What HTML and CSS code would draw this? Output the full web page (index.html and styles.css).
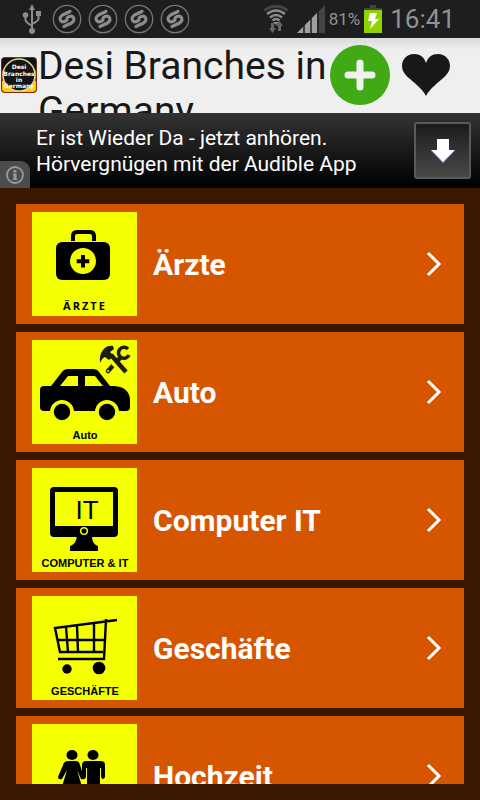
FILE: index.html
```html
<!DOCTYPE html>
<html lang="de">
<head>
    <meta charset="utf-8">
    <meta name="viewport" content="width=device-width, initial-scale=1">
    <title>Desi Branches in Germany</title>
    <link rel="stylesheet" href="styles.css">
</head>
<body>
    <div class="status-bar">
        <div class="status-left">
            <svg class="usb" width="20" height="30" viewBox="0 0 20 30" fill="none" stroke="#8c8c8c" stroke-width="2">
                <path d="M10 4v22M3.500 11v5q0 2 6.500 6M16.500 10v5q0 2-6.500 5"/>
                <path d="M10 0l3 6H7zM14 7h5v5h-5z" fill="#8c8c8c" stroke="none"/>
                <circle cx="3.500" cy="11" r="2.800" fill="#8c8c8c" stroke="none"/>
                <circle cx="10" cy="27" r="3" fill="#8c8c8c" stroke="none"/>
            </svg>
            <svg class="shazam" viewBox="0 0 30 30"><use href="#shazam"/></svg>
            <svg class="shazam" viewBox="0 0 30 30"><use href="#shazam"/></svg>
            <svg class="shazam" viewBox="0 0 30 30"><use href="#shazam"/></svg>
            <svg class="shazam" viewBox="0 0 30 30"><use href="#shazam"/></svg>
        </div>
        <div class="status-right">
            <svg width="26" height="28" viewBox="0 0 26 28" fill="none">
                <path d="M1.500 5.500Q13-3 24.500 5.500" stroke="#444" stroke-width="3"/>
                <path d="M4 9q9-7 18 0M7 12.500q6-5 12 0M9.500 15.500q3.500-3 7 0" stroke="#8c8c8c" stroke-width="2.400"/>
                <path d="M10 17h6l-3 3z" fill="#8c8c8c"/>
                <path d="M8 18h3v5h2l-3.500 5L6 23h2zM15 26v-5h-2l3.500-5 3.500 5h-2v5z" fill="#666"/>
            </svg>
            <svg class="signal" width="28" height="28" viewBox="0 0 28 28">
                <path d="M0 28L28 0v28z" fill="#444"/>
                <path d="M0 28L20 8v20z" fill="#a0a0a0"/>
                <path d="M7 20v8M14 13v15M21 6v22" stroke="#1e1e1e" stroke-width="1.500"/>
            </svg>
            <span class="battery-level">81%</span>
            <svg class="battery" width="18" height="28" viewBox="0 0 18 28">
                <path d="M6 0h6v3h6v3H0V3h6z" fill="#444"/>
                <path d="M0 5h18v23H0z" fill="#8fd400"/>
                <path d="M6 8h7l-2 6h4L6 24l2-8H4z" fill="#fff"/>
            </svg>
            <span class="clock">16:41</span>
        </div>
    </div>

    <header class="header">
        <svg class="logo" viewBox="0 0 36 36">
            <rect x="0.500" y="0.500" width="35" height="35" rx="3" fill="#111"/>
            <path d="M1 13h34v12H1z" fill="#d8251c"/>
            <path d="M1 24h34v8q0 3-3 3H4q-3 0-3-3z" fill="#fc0"/>
            <rect x="0.500" y="0.500" width="35" height="35" rx="3" fill="none" stroke="#7a2a10"/>
            <circle cx="18" cy="18" r="16" fill="#151515" stroke="#e6d98c" stroke-width="1.500"/>
            <text x="18" y="12">Desi</text>
            <text x="18" y="19">Branches</text>
            <text x="18" y="25">in</text>
            <text x="18" y="31">Germany</text>
        </svg>
        <h1>Desi Branches in Germany</h1>
        <button class="add-button" aria-label="Hinzufügen">
            <svg viewBox="0 0 60 60">
                <circle cx="30" cy="30" r="30" fill="#40a913"/>
                <path d="M30 18v24M18 30h24" stroke="#f0f0f0" stroke-width="7" stroke-linecap="round"/>
            </svg>
        </button>
        <button class="fav-button" aria-label="Favoriten">
            <svg viewBox="0 0 48 42">
                <path d="M24 42C21 36 15 31 8 25C2 20 0 16 0 12C0 5 5 0 12 0C18 0 22 3 24 9C26 3 30 0 36 0C43 0 48 5 48 12C48 16 46 20 40 25C33 31 27 36 24 42Z" fill="#181818"/>
            </svg>
        </button>
    </header>

    <div class="ad">
        <p>Er ist Wieder Da - jetzt anhören.<br>Hörvergnügen mit der Audible App</p>
        <button class="ad-download" aria-label="Herunterladen">
            <svg width="24" height="24" viewBox="0 0 24 24">
                <path d="M6 0h12v11h6L12 24 0 11h6z" fill="#fff"/>
                <path d="M0 11.500L12 23.500l12-12" fill="none" stroke="#4c68bd"/>
            </svg>
        </button>
        <button class="ad-info" aria-label="Info">
            <svg width="18" height="18" viewBox="0 0 18 18">
                <circle cx="9" cy="9" r="8" fill="none" stroke="#999" stroke-width="1.800"/>
                <path d="M7.500 4h3v2.500h-3zM6.500 7.500h4V13h1v1h-5v-1h1V8.500h-1z" fill="#999"/>
            </svg>
        </button>
    </div>

    <main class="content">
        <nav class="list">
            <a class="item" href="#aerzte">
                <svg class="thumb" viewBox="0 0 105 104">
                    <path d="M41 29v-5q0-4 4-4h13q4 0 4 4v5" fill="none" stroke="#000" stroke-width="4"/>
                    <rect x="24" y="30" width="54" height="38" rx="6"/>
                    <circle cx="51" cy="49" r="13" fill="#f4ff00"/>
                    <path d="M51 43v12.500M44.700 49.200h12.600" stroke="#000" stroke-width="4"/>
                    <text class="caption spaced" x="53" y="98">ÄRZTE</text>
                </svg>
                <span class="name">Ärzte</span>
                <svg class="chevron" viewBox="0 0 16 26"><path d="M2 2l11 11L2 24"/></svg>
            </a>
            <a class="item" href="#auto">
                <svg class="thumb" viewBox="0 0 105 104">
                    <path d="M8 50q0-4 4-4h7L30 32q2-3 6-3h25q4 0 6 3l11 14h4q16 1 16 15v6q0 4-4 4H12q-4 0-4-4z"/>
                    <path d="M28 46l8-10h10v10zM53 36h10l8 10H53z" fill="#f4ff00"/>
                    <path d="M18 72a12 12 0 0 1 24 0zM63 72a12 12 0 0 1 24 0z" fill="#f4ff00"/>
                    <circle cx="30" cy="72" r="8.200"/>
                    <circle cx="75" cy="72" r="8.200"/>
                    <path d="M96 9A5.500 5.500 0 1 0 97 15" fill="none" stroke="#1c1c10" stroke-width="3.500"/>
                    <path d="M88 18L76 31" stroke="#1c1c10" stroke-width="4.500" stroke-linecap="round"/>
                    <path d="M74 14L96 38" stroke="#f4ff00" stroke-width="6"/>
                    <path d="M79 15L94 32" stroke="#1c1c10" stroke-width="4.500"/>
                    <path d="M68 23q-1-8 3-13 4-5 10-4l1 3-4 3 4 4-5 4-4-3q-3 1-5 6z" fill="#1c1c10"/>
                    <circle cx="76" cy="31" r="1" fill="#f4ff00"/>
                    <text class="caption" x="53" y="99">Auto</text>
                </svg>
                <span class="name">Auto</span>
                <svg class="chevron" viewBox="0 0 16 26"><path d="M2 2l11 11L2 24"/></svg>
            </a>
            <a class="item" href="#computer">
                <svg class="thumb" viewBox="0 0 105 104">
                    <rect x="18" y="19" width="68" height="50" rx="4"/>
                    <path d="M23 24h58v34H23z" fill="#f4ff00"/>
                    <path d="M45 68h15q0 8 6 10v5H38v-5q6-2 7-10z"/>
                    <circle cx="52" cy="63" r="3.300" fill="none" stroke="#f4ff00" stroke-width="1.500"/>
                    <text class="screen-text" x="55" y="51">IT</text>
                    <text class="caption" x="53" y="99">COMPUTER &amp; IT</text>
                </svg>
                <span class="name">Computer IT</span>
                <svg class="chevron" viewBox="0 0 16 26"><path d="M2 2l11 11L2 24"/></svg>
            </a>
            <a class="item" href="#geschaefte">
                <svg class="thumb" viewBox="0 0 105 104">
                    <path d="M85 24L23 32l5 24h43M74 23l-2 40H26M25 44h48M34 31l2 25M45 30l1 26M62 27v29" fill="none" stroke="#000" stroke-width="2.400"/>
                    <circle cx="35" cy="73" r="4.700"/>
                    <circle cx="67" cy="72" r="6.300"/>
                    <text class="caption" x="53" y="99">GESCHÄFTE</text>
                </svg>
                <span class="name">Geschäfte</span>
                <svg class="chevron" viewBox="0 0 16 26"><path d="M2 2l11 11L2 24"/></svg>
            </a>
            <a class="item" href="#hochzeit">
                <svg class="thumb" viewBox="0 0 105 104">
                    <ellipse cx="40" cy="31" rx="5.500" ry="5"/>
                    <ellipse cx="61" cy="31" rx="5.500" ry="5"/>
                    <path d="M36 37h8q3 0 4 4l4 12q0 3-3 2l-4-9 6 20H29l6-20-5 9q-4 1-4-2l5-12q1-4 5-4zM34 66h5v20h-5zM41 66h5v20h-5z"/>
                    <path d="M54 37h15q4 0 4 4v12q-2 4-4 0v-9h-1v42h-6V62h-1v24h-6V44h-1v9q-2 4-4 1V41q0-4 4-4z"/>
                </svg>
                <span class="name">Hochzeit</span>
                <svg class="chevron" viewBox="0 0 16 26"><path d="M2 2l11 11L2 24"/></svg>
            </a>
        </nav>
    </main>

    <svg width="0" height="0" class="defs">
        <symbol id="shazam" viewBox="0 0 30 30">
            <circle cx="15" cy="15" r="13.700" fill="none" stroke="#777" stroke-width="1.300"/>
            <path d="M18 7.500L10.500 11q-4 3-1.500 6 2.500 2 6-1M12 22.500l7.500-3.500q4-3 1.500-6-2.500-2-6 1" fill="none" stroke="#8c8c8c" stroke-width="3.200" stroke-linecap="round"/>
        </symbol>
    </svg>
</body>
</html>
```
FILE: styles.css
```css
* {
    box-sizing: border-box;
}
body {
    margin: 0;
    height: 100vh;
    display: flex;
    flex-direction: column;
    overflow: hidden;
    background-color: #3b1800;
    font-family: Roboto, sans-serif;
}
button {
    padding: 0;
    border: none;
    background: none;
    cursor: pointer;
}
svg {
    display: block;
    flex-shrink: 0;
}
.defs {
    position: absolute;
}
.status-bar {
    display: flex;
    justify-content: space-between;
    align-items: center;
    flex-shrink: 0;
    height: 38px;
    padding: 0 25px 0 22px;
    background-color: #1e1e1e;
    color: #929292;
}
.status-left {
    display: flex;
    align-items: center;
    gap: 6px;
}
.usb {
    margin-right: 4px;
}
.shazam {
    width: 30px;
    height: 30px;
}
.status-right {
    display: flex;
    align-items: center;
}
.signal {
    margin: 0 4px 0 8px;
}
.battery-level {
    font-size: 17px;
}
.battery {
    margin: 0 8px 0 4px;
}
.clock {
    font-size: 26px;
}
.header {
    display: flex;
    align-items: center;
    flex-shrink: 0;
    height: 75px;
    padding: 0 30px 1px 1px;
    overflow: hidden;
    background: linear-gradient(#dadada, #efefef 12px);
}
.logo {
    width: 36px;
    height: 36px;
}
.logo text {
    font: bold 6px "DejaVu Sans", sans-serif;
    fill: #fff;
    text-anchor: middle;
}
.header h1 {
    flex: 1;
    align-self: flex-start;
    margin: 0;
    padding: 6px 0 0 1px;
    font-size: 39px;
    font-weight: 400;
    line-height: 45px;
    color: #181818;
}
.add-button {
    width: 60px;
    height: 60px;
    margin-right: 12px;
}
.fav-button {
    width: 48px;
    height: 42px;
}
.ad {
    position: relative;
    display: flex;
    align-items: center;
    justify-content: space-between;
    flex-shrink: 0;
    height: 75px;
    padding: 0 9px 0 36px;
    background: linear-gradient(#333, #000);
    color: #fff;
}
.ad p {
    margin: 0;
    font-size: 21px;
    line-height: 26px;
}
.ad-download {
    display: flex;
    align-items: center;
    justify-content: center;
    width: 57px;
    height: 57px;
    border: 2px solid #5a5a5a;
    border-radius: 3px;
    background: linear-gradient(#1c1c1c, #484848);
}
.ad-info {
    position: absolute;
    left: 0;
    bottom: 0;
    display: flex;
    align-items: center;
    justify-content: center;
    width: 30px;
    height: 27px;
    border-top-right-radius: 9px;
    background-color: #4c4c4c;
}
.content {
    flex: 1;
    min-height: 0;
    padding: 16px;
}
.list {
    display: flex;
    flex-direction: column;
    gap: 8px;
    height: 100%;
    overflow: hidden;
}
.item {
    display: flex;
    align-items: center;
    flex-shrink: 0;
    gap: 16px;
    padding: 8px 22px 8px 16px;
    background-color: #d65500;
    color: #fff;
    text-decoration: none;
}
.thumb {
    width: 105px;
    height: 104px;
    background-color: #f4ff00;
}
.caption {
    font: bold 11px "Liberation Sans", Arial, sans-serif;
    text-anchor: middle;
}
.spaced {
    font-family: "Open Sans", sans-serif;
    letter-spacing: 2px;
}
.screen-text {
    font: 26px "Liberation Sans", Arial, sans-serif;
    text-anchor: middle;
}
.name {
    flex: 1;
    font-size: 30px;
    font-weight: 700;
}
.chevron {
    width: 16px;
    height: 26px;
    fill: none;
    stroke: #fff;
    stroke-width: 3;
}
```
